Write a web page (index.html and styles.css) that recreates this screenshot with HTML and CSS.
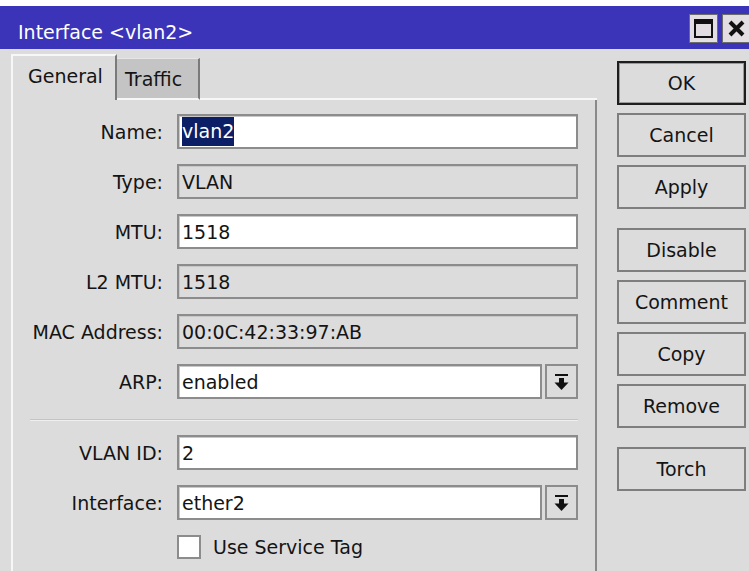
FILE: index.html
```html
<!DOCTYPE html>
<html lang="en">
<head>
<meta charset="utf-8">
<title>Interface &lt;vlan2&gt;</title>
<link rel="stylesheet" href="styles.css">
</head>
<body>
<div class="window">
  <div class="titlebar">
    <span class="title">Interface &lt;vlan2&gt;</span>
    <div class="title-btns">
      <span class="tbtn">
        <svg width="19" height="19" viewBox="0 0 19 19"><rect x="1" y="1" width="17" height="17" fill="none" stroke="#111" stroke-width="2"/><rect x="1" y="1" width="17" height="4" fill="#111"/></svg>
      </span>
      <span class="tbtn">
        <svg width="17" height="17" viewBox="0 0 17 17"><path d="M2 2 L15 15 M15 2 L2 15" stroke="#111" stroke-width="4"/></svg>
      </span>
    </div>
  </div>

  <div class="body">
    <div class="main">
      <div class="tabs">
        <div class="tab tab-active">General</div>
        <div class="tab tab-idle">Traffic</div>
        <div class="tab-fill"></div>
      </div>

      <div class="panel">
        <div class="form">
          <span class="label">Name:</span>
          <div class="field"><span class="selected">vlan2</span></div>

          <span class="label">Type:</span>
          <div class="field field-ro">VLAN</div>

          <span class="label">MTU:</span>
          <div class="field">1518</div>

          <span class="label">L2 MTU:</span>
          <div class="field field-ro">1518</div>

          <span class="label">MAC Address:</span>
          <div class="field field-ro">00:0C:42:33:97:AB</div>

          <span class="label">ARP:</span>
          <div class="combo">
            <div class="field">enabled</div>
            <span class="drop">
              <svg width="15" height="18" viewBox="0 0 15 18"><rect x="1" y="1" width="13" height="2" fill="#111"/><rect x="5" y="5" width="5" height="5" fill="#111"/><path d="M0.5 9.5 H14.5 L7.5 17 Z" fill="#111"/></svg>
            </span>
          </div>
        </div>

        <div class="separator"></div>

        <div class="form">
          <span class="label">VLAN ID:</span>
          <div class="field">2</div>

          <span class="label">Interface:</span>
          <div class="combo">
            <div class="field">ether2</div>
            <span class="drop">
              <svg width="15" height="18" viewBox="0 0 15 18"><rect x="1" y="1" width="13" height="2" fill="#111"/><rect x="5" y="5" width="5" height="5" fill="#111"/><path d="M0.5 9.5 H14.5 L7.5 17 Z" fill="#111"/></svg>
            </span>
          </div>

          <span class="label"></span>
          <div class="check-row">
            <span class="checkbox"></span>
            <span>Use Service Tag</span>
          </div>
        </div>
      </div>
    </div>

    <div class="buttons">
      <div class="btn-group">
        <div class="btn btn-default">OK</div>
        <div class="btn">Cancel</div>
        <div class="btn">Apply</div>
      </div>
      <div class="btn-group">
        <div class="btn">Disable</div>
        <div class="btn">Comment</div>
        <div class="btn">Copy</div>
        <div class="btn">Remove</div>
      </div>
      <div class="btn-group">
        <div class="btn">Torch</div>
      </div>
    </div>
  </div>
</div>
</body>
</html>
```

FILE: styles.css
```css
html, body {
  margin: 0;
  padding: 0;
  background: #ffffff;
  overflow: hidden;
}

body {
  font-family: "DejaVu Sans", "Liberation Sans", sans-serif;
  font-size: 19px;
  color: #141414;
  padding-top: 6px;
}

.window {
  height: 565px;
  background: #dcdcdc;
  overflow: hidden;
  display: flex;
  flex-direction: column;
}

/* title bar */
.titlebar {
  height: 43px;
  background: #3b34b8;
  display: flex;
  align-items: center;
  justify-content: space-between;
  flex-shrink: 0;
}

.title {
  color: #ffffff;
  padding-left: 18px;
  padding-top: 8px;
}

.title-btns {
  display: flex;
  gap: 4px;
  margin-right: -2px;
  align-self: flex-start;
  padding-top: 8px;
}

.tbtn {
  width: 27px;
  height: 27px;
  background: #e2dee2;
  border: 1px solid #6c6c6c;
  display: flex;
  align-items: center;
  justify-content: center;
}

/* body */
.body {
  flex: 1;
  display: flex;
  min-height: 0;
}

.main {
  width: 586px;
  padding-left: 11px;
  padding-top: 5px;
  display: flex;
  flex-direction: column;
}

.tabs {
  display: flex;
  align-items: flex-start;
  height: 46px;
  flex-shrink: 0;
}

.tab {
  box-sizing: border-box;
  display: flex;
  align-items: center;
}

.tab-active {
  width: 106px;
  height: 46px;
  border-left: 2px solid #f7f7f7;
  border-top: 2px solid #f7f7f7;
  border-right: 2px solid #7a7a7a;
  padding-left: 15px;
  padding-bottom: 5px;
}

.tab-idle {
  width: 83px;
  height: 42px;
  margin-top: 4px;
  background: #c4c4c4;
  border-top: 1px solid #e6e6e6;
  border-right: 2px solid #7a7a7a;
  border-bottom: 2px solid #f7f7f7;
  padding-left: 8px;
}

.tab-fill {
  flex: 1;
  align-self: flex-end;
  height: 2px;
  background: #f7f7f7;
}

.panel {
  flex: 1;
  border-left: 2px solid #f7f7f7;
  border-right: 2px solid #8a8a8a;
  padding: 14px 17px 0 0;
}

.form {
  display: grid;
  grid-template-columns: 150px 1fr;
  column-gap: 14px;
  row-gap: 15px;
  grid-auto-rows: 35px;
}

.label {
  text-align: right;
  align-self: center;
  white-space: nowrap;
}

.field {
  box-sizing: border-box;
  height: 35px;
  background: #ffffff;
  border: 2px solid #8c8c8c;
  box-shadow: inset 1px 1px 0 #c8c8c8;
  padding-left: 3px;
  display: flex;
  align-items: center;
  white-space: nowrap;
}

.field-ro {
  background: #dcdcdc;
}

.selected {
  background: #0c1f66;
  color: #ffffff;
  padding: 2px 0 3px;
  line-height: 24px;
}

.combo {
  display: flex;
  gap: 3px;
}

.combo .field {
  flex: 1;
}

.drop {
  box-sizing: border-box;
  width: 33px;
  height: 35px;
  border: 2px solid #8c8c8c;
  background: #dcdcdc;
  display: flex;
  align-items: center;
  justify-content: center;
}

.separator {
  margin: 20px 0 14px 17px;
  height: 0;
  border-top: 1px solid #c4c4c4;
  border-bottom: 1px solid #efefef;
}

.check-row {
  display: flex;
  align-items: center;
  gap: 12px;
  height: 23px;
  align-self: start;
}

.checkbox {
  box-sizing: border-box;
  width: 24px;
  height: 24px;
  background: #ffffff;
  border: 2px solid #8c8c8c;
}

/* right-hand button column */
.buttons {
  margin-left: 20px;
  padding-top: 12px;
  width: 129px;
  display: flex;
  flex-direction: column;
  gap: 19px;
}

.btn-group {
  display: flex;
  flex-direction: column;
  gap: 8px;
}

.btn {
  box-sizing: border-box;
  height: 44px;
  border: 2px solid #7e7e7e;
  background: #dcdcdc;
  display: flex;
  align-items: center;
  justify-content: center;
}

.btn-default {
  border-color: #1e1e1e;
  box-shadow: inset 0 0 0 1px #9a9a9a;
}
```
